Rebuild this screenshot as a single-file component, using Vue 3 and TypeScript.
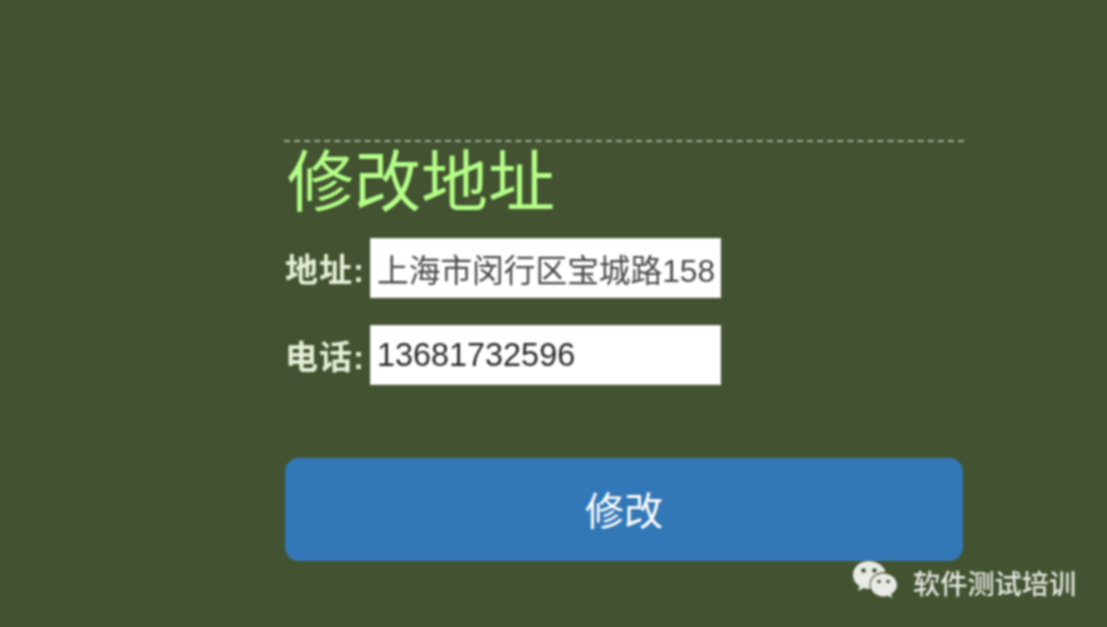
<script setup lang="ts">
import { ref } from 'vue'

const address = ref('上海市闵行区宝城路158号')
const phone = ref('13681732596')
</script>

<template>
  <div class="page">
    <form class="address-form" @submit.prevent>
      <h1 class="form-title">修改地址</h1>

      <div class="field">
        <label class="field-label" for="address">地址:</label>
        <input id="address" v-model="address" class="field-input address-input" type="text" />
      </div>
      <div class="field">
        <label class="field-label" for="phone">电话:</label>
        <input id="phone" v-model="phone" class="field-input phone-input" type="text" />
      </div>

      <button class="submit-btn" type="submit">修改</button>
    </form>

    <!-- Watermark sits over the page corner -->
    <div class="watermark">
      <svg class="watermark-icon" viewBox="0 0 46 44" aria-hidden="true">
        <path
          d="M17 1C8 1 1 7 1 15c0 5 2.600 8.500 6.500 11L6 31l5.500-3c2 .6 3.600 1 5.500 1h1.200c-.5-1.300-.7-2.600-.7-4 0-7.500 6.700-13 15-13h1C32 6 25 1 17 1z"
          fill="#e9ebe6"
        />
        <path
          d="M45 25c0-6.500-6.300-11.500-13.500-11.500S18.500 18.500 18.500 25s6 11.500 13 11.500c1.500 0 3-.3 4.500-.8l4.300 2.500-1.200-4C42.800 31.800 45 28.600 45 25z"
          fill="#e9ebe6"
        />
        <circle cx="11.500" cy="10.500" r="2.300" fill="#435331" />
        <circle cx="22.500" cy="10.500" r="2.300" fill="#435331" />
        <circle cx="27" cy="21.500" r="1.800" fill="#435331" />
        <circle cx="36" cy="21.500" r="1.800" fill="#435331" />
      </svg>
      <span class="watermark-text">软件测试培训</span>
    </div>
  </div>
</template>

<style scoped>
.page {
  position: relative;
  box-sizing: border-box;
  width: 1107px;
  height: 627px;
  padding: 140px 143px 0 284px;
  overflow: hidden;
  background: #435331;
  font-family: "Liberation Sans", "Noto Sans CJK SC", sans-serif;
}

.page > * {
  filter: blur(0.8px);
}

.address-form {
  display: flex;
  flex-direction: column;
  border-top: 2px dashed #a3ac97;
}

.form-title {
  margin: 3px 0 17px 3px;
  height: 76px;
  color: #b4ff88;
  font-size: 67px;
  font-weight: 400;
  line-height: 76px;
}

.field {
  display: flex;
  align-items: center;
  height: 60px;
  margin-bottom: 27px;
}

.field-label {
  width: 86px;
  padding-left: 1px;
  box-sizing: border-box;
  color: #e6efd8;
  font-size: 33px;
  font-weight: 700;
  letter-spacing: 1px;
  white-space: nowrap;
}

.field-input {
  box-sizing: border-box;
  width: 351px;
  height: 60px;
  padding: 0 5px 0 6px;
  border: 1px solid #e4e4e0;
  background: #ffffff;
  font-family: inherit;
  outline: none;
}

.address-input {
  color: #484848;
  font-size: 31.700px;
}

.phone-input {
  color: #2a2a2a;
  font-size: 32.400px;
}

.submit-btn {
  height: 103px;
  margin: 46px 1px 0;
  padding-bottom: 4px;
  border: none;
  border-radius: 14px;
  background: #3278b7;
  color: #ffffff;
  font-family: inherit;
  font-size: 39px;
  font-weight: 400;
}

.watermark {
  position: absolute;
  top: 560px;
  left: 852px;
  display: flex;
  align-items: center;
  gap: 15px;
}

.watermark-icon {
  width: 46px;
  height: 44px;
}

.watermark-text {
  color: #e6e8e2;
  font-size: 27.200px;
  font-weight: 500;
  white-space: nowrap;
}
</style>
